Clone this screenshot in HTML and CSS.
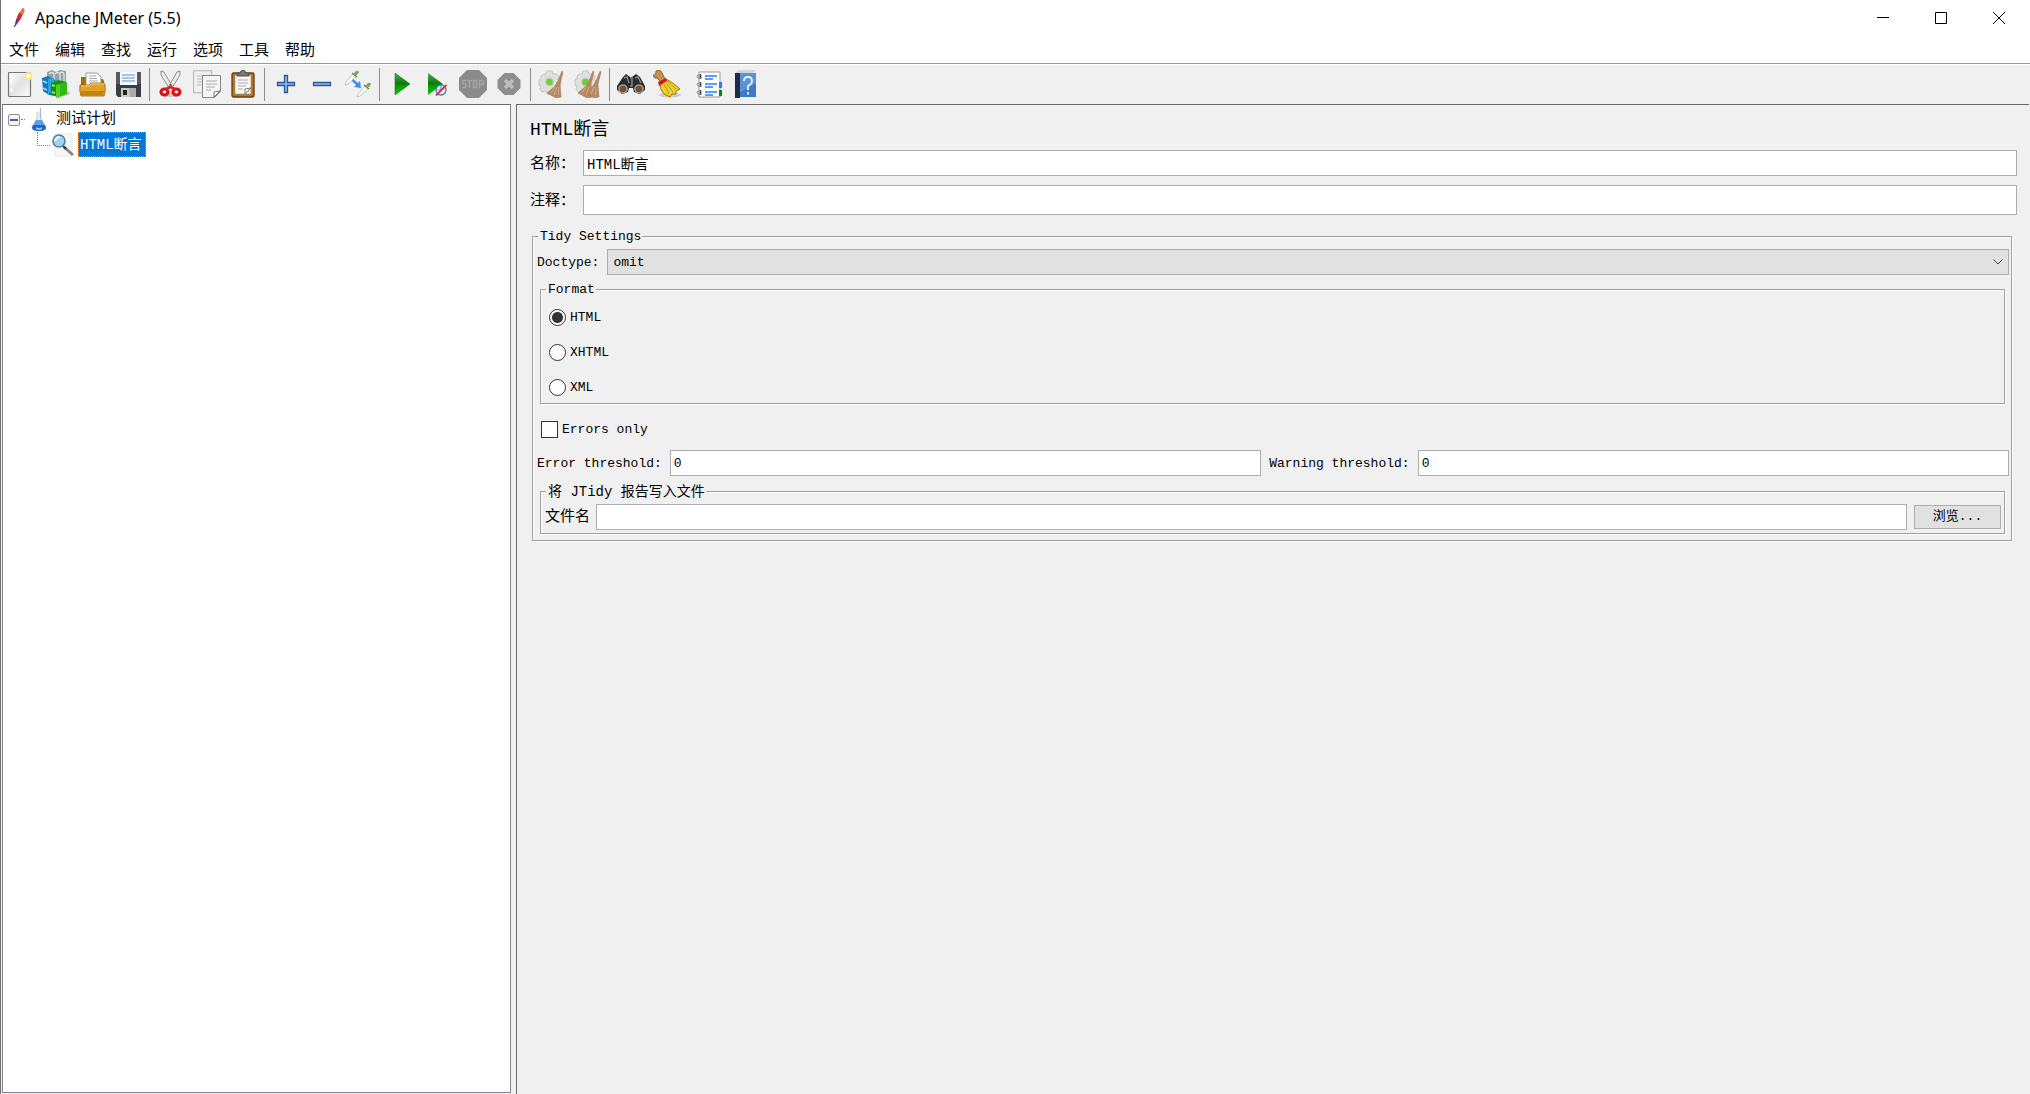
FILE: index.html
```html
<!DOCTYPE html>
<html lang="zh-CN">
<head>
<meta charset="utf-8">
<title>Apache JMeter (5.5)</title>
<link rel="stylesheet" href="styles.css">
</head>
<body>
<div class="window">
  <header class="titlebar">
    <svg class="app-icon" width="12" height="20" viewBox="0 0 12 20"><path d="M10 0q2 1 1 4L7 12l-3 4-2 1 1-5 3-7z" fill="#c5224b"/><path d="M10 0q2 1 1 4L9 7 6 5z" fill="#ef7b26"/><path d="M6 5l3 2-2 4-3-2z" fill="#d52b36"/><path d="M4 11l-1 5-2 3" stroke="#62308a" stroke-width="1.3" fill="none"/></svg>
    <h1 class="app-title">Apache JMeter (5.5)</h1>
    <div class="window-controls">
      <button type="button" aria-label="最小化"><svg width="12" height="12"><path d="M0 5.500h12" stroke="#000"/></svg></button>
      <button type="button" aria-label="最大化"><svg width="12" height="12"><path d="M.5.5h11v11H.5z" stroke="#000" fill="none"/></svg></button>
      <button type="button" aria-label="关闭"><svg width="12" height="12"><path d="M0 0l12 12M12 0L0 12" stroke="#000"/></svg></button>
    </div>
  </header>
  <nav class="menubar">
    <button type="button">文件</button>
    <button type="button">编辑</button>
    <button type="button">查找</button>
    <button type="button">运行</button>
    <button type="button">选项</button>
    <button type="button">工具</button>
    <button type="button">帮助</button>
  </nav>

  <div class="toolbar" role="toolbar">
    <button type="button" aria-label="新建"><svg viewBox="0 0 28 28"><defs><linearGradient id="paper" x2="1" y2="1"><stop stop-color="#fff"/><stop offset=".5" stop-color="#e2e2e2"/><stop offset="1" stop-color="#fafafa"/></linearGradient></defs><rect x="2.500" y="2.500" width="22" height="24" rx="1" fill="url(#paper)" stroke="#777" stroke-width="1.200"/><path d="M5.500 8v5M5.500 18v4" stroke="#fff" stroke-width="1.500"/><circle cx="22.500" cy="6" r="3" fill="#fffce0" stroke="#f5e986" stroke-width="1.800"/></svg></button>
    <button type="button" aria-label="模板"><svg viewBox="0 0 28 28"><ellipse cx="20" cy="23" rx="8" ry="3" fill="#c4c4c4"/><path d="M5 2l5-2 4 2 4-2 6 1v12l-12 3-7-6z" fill="#8fa2a8"/><path d="M7 4q3-3 5 0v6M13 4q3-3 5 0v7M18 3q3-2 4 1v7" stroke="#dfe8ea" stroke-width="1.300" fill="none"/><path d="M0 8l6-2 7 4v16l-6-1-6-4z" fill="#1379b8"/><path d="M6 9l6-1v13l-6 3z" fill="#2aa3df"/><path d="M1 11l4 2M1 18l4 2" stroke="#9bdcff" stroke-width="1.500"/><path d="M9 13l7-3 8 2-1 3-6 2v11l-8-4z" fill="#16930c"/><path d="M14 15l11-3v12l-11 4z" fill="#4fd024"/><path d="M18 14l7-2v12l-7 3z" fill="#36b718"/><path d="M10 15l3 1M10 22l3 1" stroke="#b2f77e" stroke-width="1.500"/></svg></button>
    <button type="button" aria-label="打开"><svg viewBox="0 0 28 28"><path d="M3 12V7h5l2 2h14q2 0 2 3v13H3z" fill="#a66c05"/><path d="M8 3h11l4 4v9H8z" fill="#fafafa" stroke="#999"/><path d="M11 6h7M11 8.500h8M11 11h9" stroke="#aaa"/><path d="M3 26q-2-6-1-11h9l2-2h13l1 2q1 6-1 11z" fill="#dfa126" stroke="#9b6500" stroke-width=".8"/><path d="M3 16h8l2-2h13" stroke="#f7d173" fill="none"/><path d="M3 21h23l-1 4H3z" fill="#c68309"/></svg></button>
    <button type="button" aria-label="保存"><svg viewBox="0 0 28 28"><path d="M2 2h25v25H4l-2-2z" fill="#3b3d42"/><path d="M2 2h25v12H2z" fill="#56595e"/><rect x="6" y="2" width="17" height="13" fill="#f3f9ff"/><path d="M8 5h13M8 8h13M8 11h13" stroke="#8db5dc" stroke-width="1.400"/><rect x="7" y="18" width="15" height="9" fill="#c9c9c9"/><rect x="9" y="20" width="4" height="5" fill="#222"/><path d="M15 18h7v9h-6z" fill="#aaa"/></svg></button>
    <span class="separator"></span>
    <button type="button" aria-label="剪切"><svg viewBox="0 0 28 28"><ellipse cx="14" cy="25" rx="10" ry="2" fill="#ccc"/><path d="M4 1l3 1 8 14-3 2L4 5zM23 1l-3 1-8 14 3 2 8-13z" fill="#e9eaea" stroke="#8b8e8d"/><circle cx="13.500" cy="15" r="1" fill="#555"/><ellipse cx="7.500" cy="22" rx="3.500" ry="3" fill="none" stroke="#d51515" stroke-width="3.200"/><ellipse cx="19.500" cy="22" rx="3.500" ry="3" fill="none" stroke="#d51515" stroke-width="3.200"/><path d="M9 19l4.500-2 4.500 2" stroke="#e02020" stroke-width="2.500" fill="none"/></svg></button>
    <button type="button" aria-label="复制"><svg viewBox="0 0 28 28"><rect x=".6" y=".8" width="18" height="22" fill="#f1f1f1" stroke="#b3b3b3"/><path d="M4 6h10M4 9h6M4 12h6M4 15h5" stroke="#bbb"/><path d="M9.500 5.500h18v16l-6 6h-12z" fill="#f5f5f5" stroke="#858585"/><path d="M13 11h11M13 14h11M13 17h9M13 20h5" stroke="#aaa"/><path d="M27 21l-6 6v-5z" fill="#fff" stroke="#777"/></svg></button>
    <button type="button" aria-label="粘贴"><svg viewBox="0 0 28 28"><rect x="3" y="3" width="22" height="24" rx="1.500" fill="#b5721b" stroke="#68400b" stroke-width="1.300"/><path d="M6 5h16v19H6z" fill="#f6f6f4" stroke="#999" stroke-width=".7"/><path d="M8 6V3h3q1-3 3-3t3 3h3v3z" fill="#777974" stroke="#51534e"/><path d="M9 10h10M9 13h10M9 16h8M9 19h5" stroke="#aaa"/><path d="M22 18l-6 6v-5z" fill="#fff" stroke="#777"/></svg></button>
    <span class="separator"></span>
    <button type="button" aria-label="展开"><svg viewBox="0 0 28 28"><path d="M12.500 5.500h3v7h7v3h-7v7h-3v-7h-7v-3h7z" fill="#8fb8e2" stroke="#285a9f" stroke-width="1.300"/></svg></button>
    <button type="button" aria-label="收起"><svg viewBox="0 0 28 28"><path d="M5.500 12.500h17v3h-17z" fill="#8fb8e2" stroke="#285a9f" stroke-width="1.300"/></svg></button>
    <button type="button" aria-label="切换"><svg viewBox="0 0 28 28"><g id="pipette"><path d="M1 15l1-3 7-8 3 3-8 7z" fill="#f8fafa" stroke="#b6bbbd" stroke-width=".8"/><path d="M8 3l5 4" stroke="#5c8d45" stroke-width="1.500"/><path d="M9.500 3.500l2.500-2.500q3-1 3 1.500l-2.500 3z" fill="#79ab54"/></g><use href="#pipette" x="12" y="12"/><path d="M9 9l5 4 2-2 1 7-7-1 2-2-4-4z" fill="#3d8df2"/></svg></button>
    <span class="separator"></span>
    <button type="button" aria-label="启动"><svg viewBox="0 0 28 28"><defs><linearGradient id="go" x2="0" y2="1"><stop stop-color="#53a550"/><stop offset=".5" stop-color="#087b07"/><stop offset=".55" stop-color="#069800"/><stop offset="1" stop-color="#18bd0d"/></linearGradient></defs><path d="M8 3l15 11L8 25z" fill="url(#go)" stroke="#187b18" stroke-width=".6"/></svg></button>
    <button type="button" aria-label="不停顿开始"><svg viewBox="0 0 28 28"><path d="M5 3l15 11L5 25z" fill="url(#go)"/><circle cx="18" cy="20" r="5" fill="#e2eefa" stroke="#4778b7" stroke-width="1.300"/><path d="M18 16v4h-3" stroke="#6889af" fill="none"/><path d="M13 25.500L23.500 15" stroke="#d8333b" stroke-width="1.800"/></svg></button>
    <button type="button" aria-label="停止" disabled><svg viewBox="0 0 28 28"><path d="M8 0h12l8 8v12l-8 8H8l-8-8V8z" fill="#8b8b8b"/><path d="M7 10.500H4.500q-1 0-1 1.500t1 1.500h1q1.500 0 1.500 2t-1.500 2H3.500M8 10.500h5M10.500 10v8M14.500 10.500h3v7h-3zM20.500 18v-7.500h3q1 0 1 2t-1 2h-3" fill="none" stroke="#a5a5a5" stroke-width="1.600"/></svg></button>
    <button type="button" aria-label="关闭" disabled><svg viewBox="0 0 28 28"><path d="M9.500 3h9l7 7v8l-7 7h-9l-7-7v-8z" fill="#8d8d8d"/><path d="M10 10l8 8M18 10l-8 8" stroke="#bdbdbd" stroke-width="3.500"/></svg></button>
    <span class="separator"></span>
    <button type="button" aria-label="清除"><svg viewBox="0 0 28 28"><g id="gear"><path d="M8 4l1-3h5l1 3h3l3 2-1 4 3 1v4l-3 1v4l-3 2-3-1-1 3h-4l-1-3-4 1-2-3 1-3-2-1v-5l2-1V6l3-2z" fill="#dfe1df" stroke="#c2c4c2"/><circle cx="11.500" cy="12" r="4.500" fill="#c8cbc8"/><circle cx="11.500" cy="12" r="3.200" fill="#73d02a"/></g><path id="brush" d="M24 1l1 1-3 12 1 13-5 1-9-5 8-7 3-5z" fill="#b58a61" stroke="#a07b58" stroke-width=".6"/><path d="M17 17l-4 6M19 17l-3 8M21 17l-1 8" stroke="#d0ad87"/></svg></button>
    <button type="button" aria-label="清除全部"><svg viewBox="0 0 28 28"><use href="#gear"/><use href="#brush" x="-5"/><use href="#brush" x="2"/><path d="M12 17l-4 6M15 17l-3 8M20 17l-3 7M23 17l-2 8" stroke="#d0ad87"/></svg></button>
    <span class="separator"></span>
    <button type="button" aria-label="查找"><svg viewBox="0 0 28 28"><path d="M6 7l3-3 4 3h2l4-3 4 3 5 9v4l-5 4-6-2-1-4h-4l-1 4-6 2-5-4v-4z" fill="#292b2d"/><path d="M7 8l3-1 2 6M18 8l3-1 3 6M13 8h2v8h-2" stroke="#85888a" fill="none" stroke-width="1.500"/><circle cx="6" cy="19" r="4" fill="#75512d" stroke="#9b9c9d" stroke-width="1.600"/><circle cx="22" cy="19" r="4" fill="#75512d" stroke="#9b9c9d" stroke-width="1.600"/></svg></button>
    <button type="button" aria-label="重置查找"><svg viewBox="0 0 28 28"><ellipse cx="17" cy="25" rx="11" ry="2.500" fill="#ccc"/><path d="M0 5q3 1 3-4 5-2 6 2l3 6-4 3-4-4q-3 1-4-3z" fill="#c49250" stroke="#8e6026"/><path d="M7 12l6-3q8 4 14 10l-4 2v3l-4 0-2 3-6-3q-5-5-4-12z" fill="#edcf32" stroke="#9b7c00"/><path d="M11 14l5 10M13 13l7 9M14 11l9 8" stroke="#b99910"/><path d="M5 12l8-4 1 3-8 5z" fill="#d21a1a"/></svg></button>
    <span class="separator separator-faint"></span>
    <button type="button" aria-label="函数助手"><svg viewBox="0 0 28 28"><path d="M3 2h21v25H3z" fill="#fff" stroke="#999"/><path d="M23 12h3v6h-3z" fill="#3478f0"/><path d="M23 20h3v6h-3z" fill="#0b8418"/><path d="M9 6h12M9 9h8M9 14h12M9 17h8M9 22h12M9 25h8" stroke="#247df2" stroke-width="1.400"/><path d="M4.500 4v5M4.500 12v5M4.500 20v5" stroke="#222" stroke-width="1.500"/><path d="M5 5H2q-2 1 0 3h3M5 13H2q-2 1 0 3h3M5 21H2q-2 1 0 3h3" fill="none" stroke="#888"/></svg></button>
    <button type="button" aria-label="帮助"><svg viewBox="0 0 28 28"><path d="M3 3l4-3h17l-3 3z" fill="#cfd6dc"/><path d="M7 3h17v24H7z" fill="#3d79c5"/><path d="M7 3h17v10L7 23z" fill="#5a93d8"/><path d="M3 3h5v25H3z" fill="#1c2c42"/><path d="M12 11q0-4 4-4t4 4q0 3-4 5v4M16 22v2.500" stroke="#e9f3ff" stroke-width="1.800" fill="none"/></svg></button>
  </div>

  <main class="workspace">
    <aside class="tree-pane">
      <ul class="tree">
        <li class="tree-row">
          <button type="button" class="expander" aria-label="折叠"></button>
          <svg class="flask" width="18" height="24" viewBox="0 0 18 24"><path d="M7 4l3-1v7l6 10q0 3-7 3t-8-3l6-10z" fill="#dfeaf3"/><path d="M10.500 0v10l5 9" stroke="#a5b4be" fill="none"/><path d="M7 4v6l-5 9" stroke="#c5d1d9" fill="none"/><path d="M6 12h6l4 8q-1 3-7 3t-7-3z" fill="#5e9fe4"/><path d="M3 17h12l1 3q-1 3-7 3t-7-3z" fill="#1765c5"/><path d="M6 20q3 2 6 0" stroke="#8fc6fa" stroke-width="2" fill="none"/></svg>
          <span class="cjk">测试计划</span>
        </li>
        <li class="tree-row tree-child">
          <svg class="lens" width="24" height="24" viewBox="0 0 24 24"><path d="M4 1h17v22H4z" fill="#f8f8f8" stroke="#e4e4e4"/><path d="M13 14l9 8" stroke="#888" stroke-width="3"/><path d="M12 13l3 3" stroke="#333" stroke-width="2"/><circle cx="8" cy="8" r="6" fill="#9fd3ef" stroke="#57819a" stroke-width="1.600"/><path d="M4 8q1-4 5-4" stroke="#e9faff" stroke-width="2" fill="none"/></svg>
          <span class="tree-selected">HTML断言</span>
        </li>
      </ul>
    </aside>

    <form class="editor">
      <h2 class="editor-title">HTML断言</h2>
      <div class="field">
        <label class="field-label cjk" for="name">名称：</label>
        <input class="text-box mixed" id="name" type="text" value="HTML断言">
      </div>
      <div class="field field-comment">
        <label class="field-label cjk" for="comment">注释：</label>
        <input class="text-box comment-box" id="comment" type="text">
      </div>

      <fieldset class="group tidy">
        <legend>Tidy Settings</legend>
        <div class="field doctype">
          <label for="doctype">Doctype:</label>
          <div class="select-wrap">
            <select id="doctype"><option>omit</option><option>auto</option><option>strict</option><option>loose</option></select>
            <svg class="chevron" width="10" height="6"><path d="M.5.5L5 5 9.500.5" fill="none" stroke="#444"/></svg>
          </div>
        </div>

        <fieldset class="group format">
          <legend>Format</legend>
          <label class="choice"><input type="radio" name="format" checked><span>HTML</span></label>
          <label class="choice"><input type="radio" name="format"><span>XHTML</span></label>
          <label class="choice"><input type="radio" name="format"><span>XML</span></label>
        </fieldset>

        <label class="choice errors-only"><input type="checkbox"><span>Errors only</span></label>

        <div class="thresholds">
          <label for="errors">Error threshold:</label>
          <input class="text-box" id="errors" type="text" value="0">
          <label class="warning-label" for="warnings">Warning threshold:</label>
          <input class="text-box" id="warnings" type="text" value="0">
        </div>

        <fieldset class="group report">
          <legend class="mixed">将 JTidy 报告写入文件</legend>
          <div class="field">
            <label class="cjk" for="file">文件名</label>
            <input class="text-box" id="file" type="text">
            <button type="button" class="browse">浏览...</button>
          </div>
        </fieldset>
      </fieldset>
    </form>
  </main>
</div>
</body>
</html>
```
FILE: styles.css
```css
* {
  box-sizing: border-box;
}

body {
  margin: 0;
  color: #000;
  background: #f0f0f0;
  font: 13px/16px "Liberation Mono", "Noto Sans CJK SC", monospace;
}

button,
input,
select {
  margin: 0;
  color: inherit;
  font: inherit;
}

svg {
  display: block;
}

.cjk {
  font-size: 15px;
}

.mixed {
  font-size: 14px;
}

.window {
  display: flex;
  flex-direction: column;
  min-height: 100vh;
  border-left: 1px solid #707070;
}

/* Title bar and menus */
.titlebar {
  display: flex;
  align-items: center;
  height: 36px;
  padding: 0 2px 0 12px;
  background: #fff;
}

.app-title {
  flex: 1;
  margin: 0 0 0 10px;
  font: 400 16px/24px "Noto Sans", "Open Sans", sans-serif;
}

.window-controls {
  display: flex;
}

.window-controls button {
  display: grid;
  place-items: center;
  width: 58px;
  height: 36px;
  padding: 0;
  border: 0;
  background: none;
}

.menubar {
  display: flex;
  height: 27px;
  background: #fff;
}

.menubar button {
  width: 46px;
  padding: 0 0 2px;
  border: 0;
  background: none;
  font: 15px/24px "Noto Sans CJK SC", sans-serif;
}

/* Toolbar */
.toolbar {
  display: flex;
  align-items: center;
  height: 41px;
  padding-left: 1px;
  border-top: 1px solid #999;
  box-shadow: inset 0 1px #fff;
}

.toolbar button {
  display: grid;
  place-items: center;
  width: 36px;
  height: 36px;
  padding: 0;
  border: 0;
  background: none;
}

.toolbar svg {
  width: 28px;
  height: 28px;
}

.separator {
  width: 7px;
  height: 33px;
  background: linear-gradient(#8c8c8c, #8c8c8c) center / 1px 100% no-repeat;
}

.separator-faint {
  background: none;
}

/* Split panes */
.workspace {
  display: flex;
  flex: 1;
  gap: 5px;
  padding: 0 1px;
}

.tree-pane {
  flex: 0 0 509px;
  margin-bottom: 1px;
  border: 1px solid #82858f;
  border-top-color: #696969;
  background: #fff;
}

.tree {
  margin: 0;
  padding: 2px 0 0 5px;
  list-style: none;
}

.tree-row {
  position: relative;
  display: flex;
  align-items: center;
  height: 25px;
}

.expander {
  width: 12px;
  height: 12px;
  padding: 0;
  border: 1px solid #919191;
  border-radius: 2px;
  background: linear-gradient(#4063aa, #4063aa) center / 8px 2px no-repeat, #f5f5f5;
}

.expander::after {
  position: absolute;
  top: 12px;
  left: 13px;
  width: 4px;
  border-top: 1px dotted #808080;
  content: "";
}

.flask {
  margin: 0 8px 0 10px;
}

.tree-child {
  padding-left: 43px;
}

.tree-child::before {
  position: absolute;
  top: 0;
  left: 29px;
  width: 12px;
  height: 13px;
  border: dotted #808080;
  border-width: 0 0 1px 1px;
  content: "";
}

.tree-selected {
  margin-left: 3px;
  padding: 1px 3px 0 1px;
  border: 1px dotted #ff8728;
  color: #fff;
  background: #0078d7;
  font-size: 14px;
  line-height: 22px;
}

/* Editor form */
.editor {
  flex: 1;
  min-width: 0;
  padding: 13px 12px 20px 13px;
  border: solid #696969;
  border-width: 1px 0 0 1px;
}

.editor label {
  padding-top: 2px;
}

.editor-title {
  margin: 0 0 8px;
  font-size: 18px;
  font-weight: 400;
  line-height: 24px;
}

.field {
  display: flex;
  align-items: center;
  gap: 6px;
}

.editor .field-label {
  flex: 0 0 47px;
  padding-top: 4px;
  white-space: nowrap;
}

.field-comment {
  margin-top: 9px;
}

.doctype {
  gap: 8px;
}

.text-box {
  flex: 1;
  min-width: 0;
  height: 26px;
  padding: 0 3px;
  border: 1px solid #abadb3;
  background: #fff;
}

.comment-box {
  height: 30px;
}

.group {
  min-width: 0;
  margin: 0;
  border: 1px solid #a0a0a0;
  box-shadow: 1px 1px #fff, inset 1px 1px #fff;
}

.group > legend {
  margin-left: 1px;
  padding: 2px 1px 0 2px;
  background: #f0f0f0;
  line-height: 16px;
}

.tidy {
  margin: 12px 5px 0 2px;
  padding: 4px 2px 6px 4px;
}

.select-wrap {
  position: relative;
  flex: 1;
}

.select-wrap select {
  display: block;
  width: 100%;
  height: 26px;
  padding: 1px 5px 0;
  border: 1px solid #adadad;
  border-radius: 0;
  appearance: none;
  background: #e1e1e1;
}

.chevron {
  position: absolute;
  top: 10px;
  right: 6px;
  pointer-events: none;
}

.format {
  display: flex;
  flex-direction: column;
  gap: 17px;
  margin: 5px 4px 0 3px;
  padding: 10px 4px 7px;
}

.report {
  margin: 6px 4px 0 3px;
  padding: 4px 3px 3px 4px;
}

.editor .choice {
  display: flex;
  align-items: center;
  align-self: flex-start;
  gap: 4px;
  height: 18px;
  padding: 0 0 0 4px;
}

.choice span {
  padding-top: 2px;
}

.choice input {
  appearance: none;
  width: 17px;
  height: 17px;
  border: 1px solid #333;
  background: #fff;
}

.choice input[type="radio"] {
  border-radius: 50%;
}

.choice input[type="radio"]:checked {
  background: radial-gradient(circle, #333 5px, #fff 6px);
}

.choice input[type="checkbox"]:checked {
  background: #333;
}

.errors-only {
  margin: 16px 0 12px;
}

.thresholds {
  display: grid;
  grid-template-columns: auto 1fr auto 1fr;
  align-items: center;
  column-gap: 8px;
}

.browse {
  width: 87px;
  height: 24px;
  margin-left: 1px;
  padding: 0;
  border: 1px solid #adadad;
  background: #e1e1e1;
  line-height: 20px;
}
```
